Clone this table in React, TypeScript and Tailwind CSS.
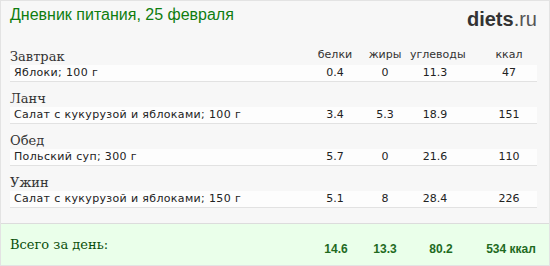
const MEALS = [
  {
    title: "Завтрак",
    food: "Яблоки; 100 г",
    values: ["0.4", "0", "11.3", "47"],
  },
  {
    title: "Ланч",
    food: "Салат с кукурузой и яблоками; 100 г",
    values: ["3.4", "5.3", "18.9", "151"],
  },
  {
    title: "Обед",
    food: "Польский суп; 300 г",
    values: ["5.7", "0", "21.6", "110"],
  },
  {
    title: "Ужин",
    food: "Салат с кукурузой и яблоками; 150 г",
    values: ["5.1", "8", "28.4", "226"],
  },
];

const LABELS = ["белки", "жиры", "углеводы", "ккал"];

const serif = { fontFamily: '"DejaVu Serif", serif' };
const verdana = { fontFamily: '"DejaVu Sans", sans-serif' };
const arial = { fontFamily: '"Liberation Sans", Arial, sans-serif' };

export default function App() {
  return (
    <div className="w-[550px] h-[266px] border border-[#e3e3e3] bg-[#f7f7f7] flex flex-col">
      {/* Title bar */}
      <div className="h-[39px] flex items-start justify-between pl-[9px] pr-[12px]">
        <h1
          className="mt-[4px] text-[16px] leading-[20px] text-[#0f7d0f]"
          style={arial}
        >
          Дневник питания, 25 февраля
        </h1>
        <div className="mt-[7px] text-[20px] leading-[22px] text-[#333]" style={arial}>
          <span className="font-bold">diets</span>
          <span className="text-[#555]">.ru</span>
        </div>
      </div>

      {/* Meals */}
      <div className="px-[9px] pr-[12px]">
        {MEALS.map((meal, i) => (
          <div key={meal.title}>
            <div className="h-[25px] grid grid-cols-[1fr_50px_50px_50px_77px] items-end">
              <div
                className="text-[13px] leading-[16px] text-[#333]"
                style={serif}
              >
                {meal.title}
              </div>
              {i === 0 &&
                LABELS.map((l, j) => (
                  <div
                    key={l}
                    className={`pb-[4px] text-center text-[11px] leading-[13px] text-[#333] ${
                      j === 3 ? "pl-[21px]" : ""
                    }`}
                    style={verdana}
                  >
                    {l}
                  </div>
                ))}
            </div>
            <div
              className="h-[17px] grid grid-cols-[1fr_50px_50px_50px_77px] bg-[#fdfdfd] border-b border-[#e2e2e2] text-[11px] leading-[16px] text-[#222]"
              style={verdana}
            >
              <div className="pl-[4px] tracking-[0.35px]">{meal.food}</div>
              {meal.values.map((v, j) => (
                <div
                  key={j}
                  className={`text-center ${j === 3 ? "pl-[21px]" : ""}`}
                >
                  {v}
                </div>
              ))}
            </div>
          </div>
        ))}
      </div>

      {/* Day total */}
      <div className="mt-[15px] h-[42px] border-t border-[#dcdcdc] bg-[#eaffea] px-[9px] pr-[12px] grid grid-cols-[1fr_50px_48px_64px_64px]">
        <div
          className="pt-[13px] text-[13px] leading-[16px] text-[#0b4f0b]"
          style={serif}
        >
          Всего за день:
        </div>
        {["14.6", "13.3", "80.2", "534 ккал"].map((v, j) => (
          <div
            key={v}
            className={`pt-[18px] text-center text-[12px] leading-[14px] font-bold text-[#1f6b1f] ${
              j === 3 ? "pl-[12px]" : ""
            }`}
            style={arial}
          >
            {v}
          </div>
        ))}
      </div>
    </div>
  );
}
